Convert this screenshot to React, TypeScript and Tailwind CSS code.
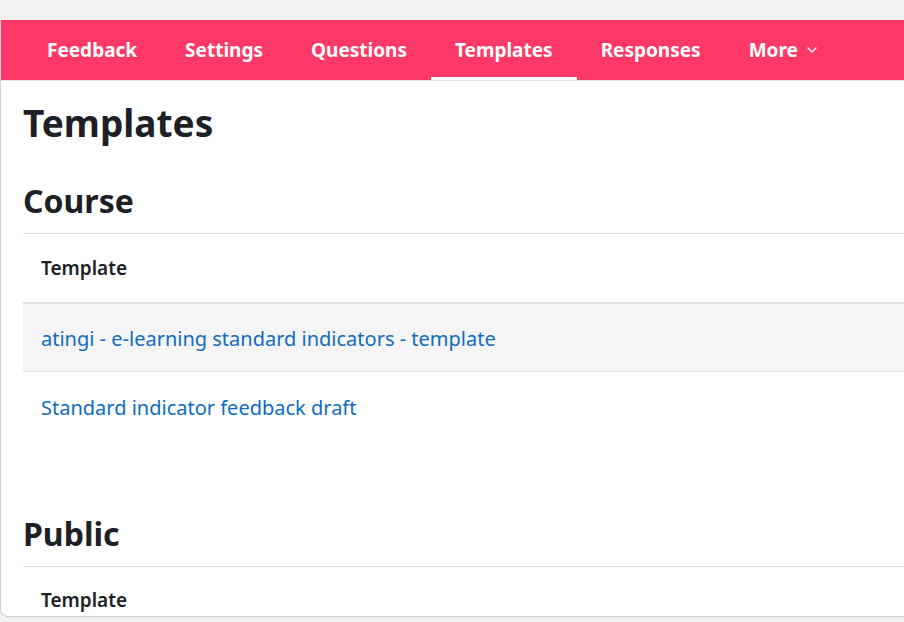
import { ChevronDown } from "lucide-react";

const tabs = ["Feedback", "Settings", "Questions", "Templates", "Responses", "More"];

function TemplateTable({ rows }: { rows: string[] }) {
  return (
    <table className="w-full border-collapse">
      <thead>
        <tr className="border-t border-[#dee2e6]">
          <th className="h-[69px] border-b-2 border-[#dee2e6] px-[18px] text-left text-[19px] font-semibold text-[#1d2125]">
            Template
          </th>
        </tr>
      </thead>
      <tbody>
        {rows.map((r, i) => (
          <tr key={r} className={i % 2 === 0 ? "bg-[#f5f5f5]" : "border-t border-[#dee2e6] bg-white"}>
            <td className="h-[69px] px-[18px] pt-[3px] text-[20px] text-[#0f6cbf]">
              <a href="#">{r}</a>
            </td>
          </tr>
        ))}
      </tbody>
    </table>
  );
}

export default function App() {
  return (
    <div className="h-[622px] overflow-hidden bg-[#f2f2f2] pt-[20px] font-['Noto_Sans',sans-serif]">
      <div className="h-[597px] overflow-hidden rounded-bl-lg border-b border-l border-[#d0d0d0] bg-white">
        {/* Secondary nav */}
        <nav className="flex h-[61px] border-b border-[#dee2e6] bg-[#ff3967] pl-[22px]">
          {tabs.map((t) => (
            <div
              key={t}
              className={
                "flex items-center px-6 text-[19px] font-bold text-white " +
                (t === "Templates" ? "border-b-[3px] border-white pt-[3px]" : "")
              }
            >
              {t}
              {t === "More" && <ChevronDown className="ml-[6px] h-[16px] w-[16px]" strokeWidth={2} />}
            </div>
          ))}
        </nav>

        <div className="pl-[22px]">
          <h1 className="mt-[18px] text-[37px] font-bold leading-[48px] text-[#1d2125]">Templates</h1>

          <h2 className="mt-[34px] text-[32px] font-bold leading-[40px] text-[#1d2125]">Course</h2>
          <div className="mt-[12px]">
            <TemplateTable
              rows={["atingi - e-learning standard indicators - template", "Standard indicator feedback draft"]}
            />
          </div>

          <h2 className="mt-[73px] text-[32px] font-bold leading-[40px] text-[#1d2125]">Public</h2>
          <div className="mt-[12px]">
            <TemplateTable rows={[]} />
          </div>
        </div>
      </div>
    </div>
  );
}
